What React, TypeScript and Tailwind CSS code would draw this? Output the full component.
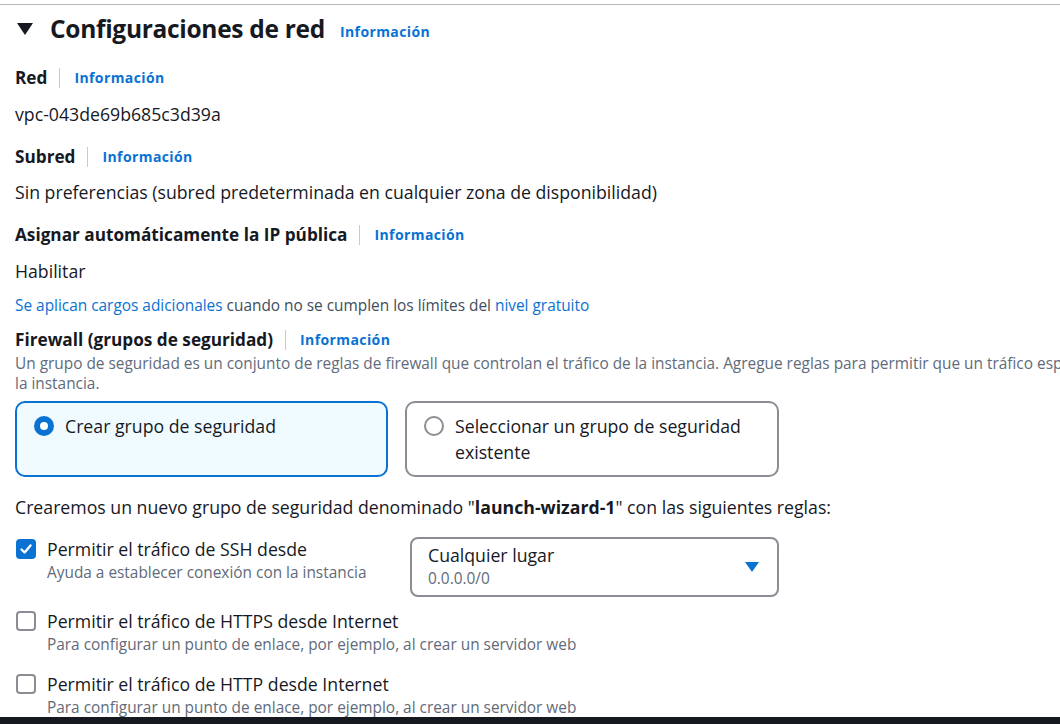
import React from "react";

const font = { fontFamily: '"Open Sans", "Noto Sans", Arial, sans-serif' };

function Info() {
  return (
    <span className="text-[14px] font-bold tracking-[0.4px] text-[#0972d3] leading-[22px]">
      Información
    </span>
  );
}

function Label({ children, className = "" }: { children: React.ReactNode; className?: string }) {
  return (
    <div className={`flex items-center h-[22px] ${className}`}>
      <span className="text-[17.2px] font-bold text-[#16191f] leading-[22px]">{children}</span>
      <span className="ml-[12px] mr-[14px] w-px h-[20px] bg-[#c6cbd1]" />
      <Info />
    </div>
  );
}

function Value({ children, className = "" }: { children: React.ReactNode; className?: string }) {
  return <div className={`text-[17.7px] leading-[22px] text-[#16191f] ${className}`}>{children}</div>;
}

function Checkbox({ checked }: { checked?: boolean }) {
  if (checked) {
    return (
      <span className="flex items-center justify-center w-[20px] h-[20px] rounded-[4px] bg-[#0972d3] shrink-0">
        <svg width="14" height="14" viewBox="0 0 14 14">
          <path d="M2.5 7.5 L5.6 10.5 L11.5 3.5" fill="none" stroke="white" strokeWidth="2.4" strokeLinecap="round" strokeLinejoin="round" />
        </svg>
      </span>
    );
  }
  return <span className="block w-[20px] h-[20px] rounded-[4px] border-2 border-[#8c8c94] bg-white shrink-0" />;
}

function CheckRow({
  checked,
  title,
  sub,
  className = "",
}: {
  checked?: boolean;
  title: string;
  sub: string;
  className?: string;
}) {
  return (
    <div className={`flex items-start ${className}`}>
      <div className="pt-px ml-px">
        <Checkbox checked={checked} />
      </div>
      <div className="ml-[11px]">
        <div className="text-[17.7px] leading-[22px] text-[#16191f]">{title}</div>
        <div className="mt-[3px] text-[15.4px] leading-[20px] text-[#5f6b7a]">{sub}</div>
      </div>
    </div>
  );
}

export default function App() {
  return (
    <div className="w-[1060px] h-[724px] overflow-hidden bg-white flex flex-col" style={font}>
      <div className="flex-1 overflow-hidden">
        <div className="mt-1 h-px bg-[#b4b4bb]" />
        <div className="px-[15px]">
          {/* Heading */}
          <div className="mt-[9px] h-[30px] flex items-center ml-[2px]">
            <svg width="16" height="12" viewBox="0 0 16 12">
              <path d="M0 0 H16 L8 12 Z" fill="#16191f" />
            </svg>
            <h2 className="ml-[17px] text-[24.5px] font-bold tracking-[-0.3px] text-[#16191f] leading-[30px]">
              Configuraciones de red
            </h2>
            <span className="ml-[15px] mt-[3px]">
              <Info />
            </span>
          </div>

          <Label className="mt-[23px]">Red</Label>
          <Value className="mt-[14px]">vpc-043de69b685c3d39a</Value>

          <Label className="mt-[21px]">Subred</Label>
          <Value className="mt-[13px]">
            Sin preferencias (subred predeterminada en cualquier zona de disponibilidad)
          </Value>

          <Label className="mt-[21px]">Asignar automáticamente la IP pública</Label>
          <Value className="mt-[14px]">Habilitar</Value>

          <div className="mt-[14px] text-[15.4px] leading-[20px] text-[#414d5c]">
            <span className="text-[#0972d3]">Se aplican cargos adicionales</span> cuando no se cumplen los
            límites del <span className="text-[#0972d3]">nivel gratuito</span>
          </div>

          <Label className="mt-[13px]">Firewall (grupos de seguridad)</Label>
          <div className="mt-[3px] text-[15.4px] leading-[20px] text-[#5f6b7a]">
            <div className="whitespace-nowrap">
              Un grupo de seguridad es un conjunto de reglas de firewall que controlan el tráfico de la
              instancia. Agregue reglas para permitir que un tráfico específico llegue a
            </div>
            <div>la instancia.</div>
          </div>

          {/* Tiles */}
          <div className="mt-[7px] flex gap-[17px]">
            <div className="w-[373px] h-[76px] rounded-[10px] border-2 border-[#0972d3] bg-[#f0fbff] pl-[17px] pt-[10px] flex items-start">
              <span className="mt-[3px] w-[20px] h-[20px] rounded-full border-[6px] border-[#0972d3] bg-white shrink-0" />
              <span className="ml-[11px] text-[17.7px] leading-[26px] text-[#16191f]">Crear grupo de seguridad</span>
            </div>
            <div className="w-[374px] h-[76px] rounded-[10px] border-2 border-[#8c8c94] bg-white pl-[17px] pt-[10px] flex items-start">
              <span className="mt-[3px] w-[20px] h-[20px] rounded-full border-2 border-[#8c8c94] bg-white shrink-0" />
              <span className="ml-[11px] text-[17.7px] leading-[26px] text-[#16191f]">
                Seleccionar un grupo de seguridad
                <br />
                existente
              </span>
            </div>
          </div>

          <Value className="mt-[19px]">
            Crearemos un nuevo grupo de seguridad denominado "<b>launch-wizard-1</b>" con las siguientes reglas:
          </Value>

          {/* SSH row */}
          <div className="mt-[19px] flex items-start">
            <div className="w-[395px] pt-px">
              <CheckRow checked title="Permitir el tráfico de SSH desde" sub="Ayuda a establecer conexión con la instancia" />
            </div>
            <div className="w-[369px] h-[60px] rounded-[8px] border-2 border-[#8c8c94] flex items-center pl-[16px] pr-[18px]">
              <div className="flex-1 -mt-[2px]">
                <div className="text-[17.7px] leading-[22px] text-[#16191f]">Cualquier lugar</div>
                <div className="mt-[3px] text-[15.4px] leading-[20px] text-[#5f6b7a]">0.0.0.0/0</div>
              </div>
              <svg width="14" height="10" viewBox="0 0 14 10">
                <path d="M0 0 H14 L7 10 Z" fill="#0972d3" />
              </svg>
            </div>
          </div>

          <CheckRow
            className="mt-[13px]"
            title="Permitir el tráfico de HTTPS desde Internet"
            sub="Para configurar un punto de enlace, por ejemplo, al crear un servidor web"
          />
          <CheckRow
            className="mt-[18px]"
            title="Permitir el tráfico de HTTP desde Internet"
            sub="Para configurar un punto de enlace, por ejemplo, al crear un servidor web"
          />
        </div>
      </div>
      <div className="h-[7px] bg-[#16191f] shrink-0" />
    </div>
  );
}
